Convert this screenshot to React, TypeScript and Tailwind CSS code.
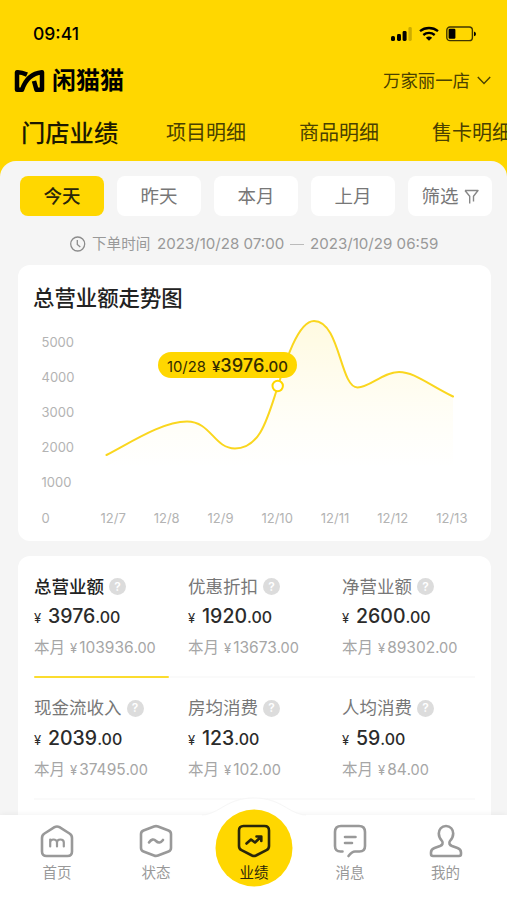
import type { ReactNode } from 'react';
import { clsx } from 'clsx';

interface Metric {
  label: string;
  value: string;
  month: string;
  active?: boolean;
}

const TABS = ['项目明细', '商品明细', '售卡明细'];
const RANGES = ['今天', '昨天', '本月', '上月'];
const Y_LABELS = ['5000', '4000', '3000', '2000', '1000', '0'];
const X_LABELS = ['12/7', '12/8', '12/9', '12/10', '12/11', '12/12', '12/13'];

const METRICS: Metric[][] = [
  [
    { label: '总营业额', value: '3976', month: '103936', active: true },
    { label: '优惠折扣', value: '1920', month: '13673' },
    { label: '净营业额', value: '2600', month: '89302' },
  ],
  [
    { label: '现金流收入', value: '2039', month: '37495' },
    { label: '房均消费', value: '123', month: '102' },
    { label: '人均消费', value: '59', month: '84' },
  ],
];

const LINE =
  'M1.5 135C28 121 58 101.5 82 101.5C106 101.5 109 128.5 130 128.5C156 128.5 163 96 173 66C180 43 193 1 209 1C235 1 235 67.5 252.5 67.5C265 67.5 278 52 294 52C309 52 322 63.500 348 76.500';

function StatusBar() {
  return (
    <div className="flex h-14 items-center justify-between pt-3 pr-[31px] pl-[33px]">
      <span className="text-[17.5px] leading-none font-medium text-black">09:41</span>
      <div className="flex items-center gap-[7px]">
        <svg width="22" height="16" viewBox="0 0 22 16">
          <rect x="1" y="10" width="4" height="5" rx="1.6" />
          <rect x="7" y="8" width="4" height="7" rx="1.4" />
          <rect x="12.600" y="5" width="4" height="10" rx="1.4" />
          <rect x="18.400" y="1" width="3.4" height="14" rx="1.4" opacity="0.2" />
        </svg>
        <svg width="20" height="16" viewBox="0 0 20 16" fill="none" stroke="#000" strokeWidth="2.3">
          <path d="M1 5.2C6.2 .9 13.800 .9 19 5.2" />
          <path d="M4.300 9C7.600 6.200 12.400 6.200 15.700 9" />
          <path d="M6.800 11.700Q10 9.300 13.200 11.700L10 14.800Z" fill="#000" stroke="none" />
        </svg>
        <svg width="30" height="16" viewBox="0 0 30 16">
          <rect x=".8" y="1" width="25.600" height="13.600" rx="3.200" fill="none" stroke="#000" strokeOpacity=".75" strokeWidth="1.400" />
          <rect x="2.600" y="2.800" width="6.800" height="10" rx="1.200" />
          <path d="M28 5.500q2 .6 2 2.400t-2 2.400z" />
        </svg>
      </div>
    </div>
  );
}

function Header() {
  return (
    <header className="shrink-0">
      <StatusBar />
      <div className="flex h-12 items-center justify-between pt-px pr-4 pl-[14px]">
        <div className="flex items-center gap-[7px]">
          <svg width="31" height="24" viewBox="0 0 31 24" fill="none" stroke="#000" strokeWidth="4.500" strokeLinejoin="round">
            <path d="M13 5.600Q7 2.800 3 3.200V20.800H8C10.500 13 16 4.500 28 3.200V20.800H22.500L20 12" />
          </svg>
          <span className="text-[24px] leading-none font-bold text-black">闲猫猫</span>
        </div>
        <div className="flex items-center gap-[7px] text-[#4a4100]">
          <span className="text-[17.4px] leading-none">万家丽一店</span>
          <svg width="14" height="9" viewBox="0 0 14 9" fill="none" stroke="currentColor" strokeWidth="1.400">
            <path d="M.8 1 7 7.500 13.200 1" />
          </svg>
        </div>
      </div>
      <nav className="flex h-[57px] items-center pt-px whitespace-nowrap">
        <span className="ml-[21px] w-[145px] shrink-0 text-[24.300px] leading-none font-medium text-[#1c1900]">门店业绩</span>
        {TABS.map(tab => (
          <span key={tab} className="w-[133px] shrink-0 text-[20px] leading-none text-[#4a4100]">{tab}</span>
        ))}
      </nav>
    </header>
  );
}

function Filters() {
  return (
    <div className="flex gap-[13px] pl-5 text-[18.500px] leading-none text-[#777]">
      {RANGES.map((range, i) => (
        <button
          key={range}
          className={clsx(
            'flex h-10 w-[84px] shrink-0 items-center justify-center rounded-lg pt-px',
            i === 0 ? 'bg-[#ffd700] font-medium text-[#29260a]' : 'bg-white',
          )}
        >
          {range}
        </button>
      ))}
      <button className="flex h-10 w-[84px] shrink-0 items-center justify-center gap-[5px] rounded-lg bg-white pt-px">
        筛选
        <svg width="15" height="16" viewBox="0 0 15 16" fill="none" stroke="#888" strokeWidth="1.400" strokeLinejoin="round">
          <path d="M1 1.500H14L9.500 7.300V12.500M1 1.500 5.700 7.300V14.500" />
        </svg>
      </button>
    </div>
  );
}

function TimeRange() {
  return (
    <div className="flex h-[49px] items-center pt-[7px] pl-[70px] text-[14.600px] leading-none whitespace-nowrap text-[#999]">
      <svg width="16" height="16" viewBox="0 0 16 16" fill="none" stroke="#8c8c8c" strokeWidth="1.300">
        <circle cx="7.700" cy="8" r="7" />
        <path d="M7.300 4V8.500L10.300 11" />
      </svg>
      <span className="ml-1.5 w-[65px]">下单时间</span>
      <span className="w-[133px] text-[15.100px]">2023/10/28 07:00</span>
      <span className="mr-1.5 h-px w-3.5 bg-[#bbb]" />
      <span className="text-[15.100px]">2023/10/29 06:59</span>
    </div>
  );
}

function TrendCard() {
  return (
    <section className="relative mr-[16.500px] ml-[17.500px] h-[276px] rounded-xl bg-white">
      <h2 className="pt-[22px] pl-[15.500px] text-[21.400px] leading-[22px] font-medium text-[#222]">总营业额走势图</h2>
      <div className="mt-[15.600px] flex flex-col pl-6 text-[13px] leading-[35.200px] text-[#b3b3b3]">
        {Y_LABELS.slice(0, 5).map(label => <span key={label}>{label}</span>)}
        <div className="flex">
          <span className="w-[59px]">{Y_LABELS[5]}</span>
          <div className="flex w-[367px] justify-between">
            {X_LABELS.map(label => <span key={label}>{label}</span>)}
          </div>
        </div>
      </div>
      <svg className="absolute top-[55px] left-[87.500px] overflow-visible" width="350" height="190" viewBox="0 0 350 190" fill="none">
        <defs>
          <linearGradient id="trend" x1="0" y1="0" x2="0" y2="1">
            <stop offset="0" stopColor="#ffd700" stopOpacity=".12" />
            <stop offset=".5" stopColor="#ffd700" stopOpacity=".035" />
            <stop offset=".8" stopColor="#ffd700" stopOpacity="0" />
          </linearGradient>
        </defs>
        <path d={`${LINE}V185H1.5Z`} fill="url(#trend)" />
        <path d={LINE} stroke="#fad61e" strokeWidth="2" strokeLinecap="round" />
        <circle cx="172.700" cy="66" r="5.200" fill="#fff" stroke="#ffd700" strokeWidth="2" />
      </svg>
      <div className="absolute top-[87px] left-[140.500px] flex h-[26px] w-[139px] items-baseline rounded-full bg-[#ffd700] pl-[9px] text-[15px] leading-[26px] whitespace-nowrap text-[#332c00]">
        <span className="w-[45px] text-[14.800px]">10/28</span>
        <span className="font-medium">¥</span>
        <span className="text-[18.200px] font-medium">3976</span>
        <span className="font-medium">.00</span>
      </div>
    </section>
  );
}

function MetricCell({ label, value, month, active }: Metric) {
  return (
    <div className="w-[154px] shrink-0 whitespace-nowrap">
      <div className="flex h-[31px] items-center gap-[5px]">
        <span className={clsx('text-[17.500px] leading-none', active ? 'font-medium text-[#222]' : 'text-[#777]')}>{label}</span>
        <span className="flex size-[17px] items-center justify-center rounded-full bg-[#dcdcdc] text-[12px] leading-none font-semibold text-white">?</span>
      </div>
      <div className="flex h-7 items-baseline leading-7 font-medium text-[#2b2b2b]">
        <span className="w-3.5 text-[13px] font-normal">¥</span>
        <span className="text-[19.500px]">{value}</span>
        <span className="text-[16px]">.00</span>
      </div>
      <div className="flex h-9 items-baseline text-[15.500px] leading-9 text-[#a6a6a6]">
        <span className="mr-[5px]">本月</span>
        <span className="mr-0.5 text-[13px]">¥</span>
        <span>{month}</span>
        <span className="text-[14.500px]">.00</span>
      </div>
    </div>
  );
}

function MetricsCard() {
  return (
    <section className="mt-[15px] mr-[16.500px] ml-[17.500px] h-[300px] rounded-t-xl bg-white pt-[15px] pl-[16.500px]">
      {METRICS.map((row, i) => (
        <div key={i} className="h-[121.500px]">
          <div className="flex h-[105px]">
            {row.map(metric => <MetricCell key={metric.label} {...metric} />)}
          </div>
          <div className="mr-4 flex h-0.5 items-end bg-[#fafafa]">
            {i === 0 && <span className="h-0.5 w-[135px] rounded-full bg-[#fbdc2f]" />}
          </div>
        </div>
      ))}
    </section>
  );
}

function NavItem({ label, width, active, children }: { label: string; width: string; active?: boolean; children: ReactNode }) {
  return (
    <div className={clsx('relative flex flex-col items-center gap-[7px] pt-[9px]', width, active ? 'text-[#29260a]' : 'text-[#999]')}>
      <svg width="34" height="34" viewBox="0 0 34 34" fill="none" stroke="currentColor" strokeWidth="2.600" strokeLinecap="round" strokeLinejoin="round">
        {children}
      </svg>
      <span className="text-[14.500px] leading-4">{label}</span>
    </div>
  );
}

function BottomNav() {
  return (
    <footer className="absolute inset-x-0 bottom-0 flex h-[85px] bg-white pl-2 shadow-[0_-1px_6px_rgba(0,0,0,0.05)]">
      {/* raised bump behind the active item */}
      <svg className="absolute -top-[19px] left-[184px]" width="140" height="104" viewBox="0 0 140 104">
        <path d="M18 19C36 18 42 2 70 2S104 18 122 19V104H18Z" fill="#fff" />
        <path d="M18 19C36 18 42 2 70 2S104 18 122 19" fill="none" stroke="#f6f6f6" />
        <circle cx="70" cy="52" r="38.500" fill="#ffd700" />
      </svg>
      <NavItem label="首页" width="w-[98px]">
        <path d="M14.500 3.200Q17 1.700 19.500 3.200L29.500 9.500Q32 11 32 14V27.500Q32 32 27.500 32H6.500Q2 32 2 27.500V14Q2 11 4.500 9.500Z" />
        <path d="M10.200 22.500V15.500M10.200 18.500C10.200 14.500 17 14.500 17 18.500V22.500M17 18.500C17 14.500 23.800 14.500 23.800 18.500V22.500" strokeWidth="2.200" />
      </NavItem>
      <NavItem label="状态" width="w-[100px]">
        <path d="M15 2.500Q17 1.700 19 2.500L29.500 6.500Q32 7.500 32 10V24Q32 26.500 29.500 27.500L19 31.500Q17 32.300 15 31.500L4.500 27.500Q2 26.500 2 24V10Q2 7.500 4.500 6.500Z" />
        <path d="M10 18.500Q13.500 13.500 17 17T24 16" />
      </NavItem>
      <NavItem label="业绩" width="w-24" active>
        <path d="M6.500 2H27.500Q32 2 32 6.500V22Q32 25 29.500 26.200L19 31.500Q17 32.400 15 31.500L4.500 26.200Q2 25 2 22V6.500Q2 2 6.500 2Z" />
        <path d="M9.500 19.500 14 15.500 18 18.500 24 12.800M19.500 12.500H24.300V17" />
      </NavItem>
      <NavItem label="消息" width="w-24">
        <path d="M9.500 27.500H7.500Q2 27.500 2 22V8Q2 2 8 2H26Q32 2 32 8V22Q32 27.500 26.500 27.500H22Q19 27.500 15.500 32" />
        <path d="M12 13H22.500M12 19H19" />
      </NavItem>
      <NavItem label="我的" width="w-[95px]">
        <path d="M17 2C12.500 2 9.800 5.500 9.800 9.500C9.800 12.500 11 14.800 13 17C14.500 19 13.500 21 11 22L5.500 24Q2 25.300 2 28.500V30Q2 32 4 32H30Q32 32 32 30V28.500Q32 25.300 28.500 24L23 22C20.500 21 19.500 19 21 17C23 14.800 24.200 12.500 24.200 9.500C24.200 5.500 21.500 2 17 2Z" />
      </NavItem>
    </footer>
  );
}

export default function App() {
  return (
    <div className="relative flex h-[900px] w-full flex-col overflow-hidden bg-[#ffd700] font-['Inter','Noto_Sans_CJK_SC',sans-serif]">
      <Header />
      <main className="min-h-0 flex-1 overflow-hidden rounded-t-2xl bg-[#f5f5f5] pt-[15px]">
        <Filters />
        <TimeRange />
        <TrendCard />
        <MetricsCard />
      </main>
      <BottomNav />
    </div>
  );
}
